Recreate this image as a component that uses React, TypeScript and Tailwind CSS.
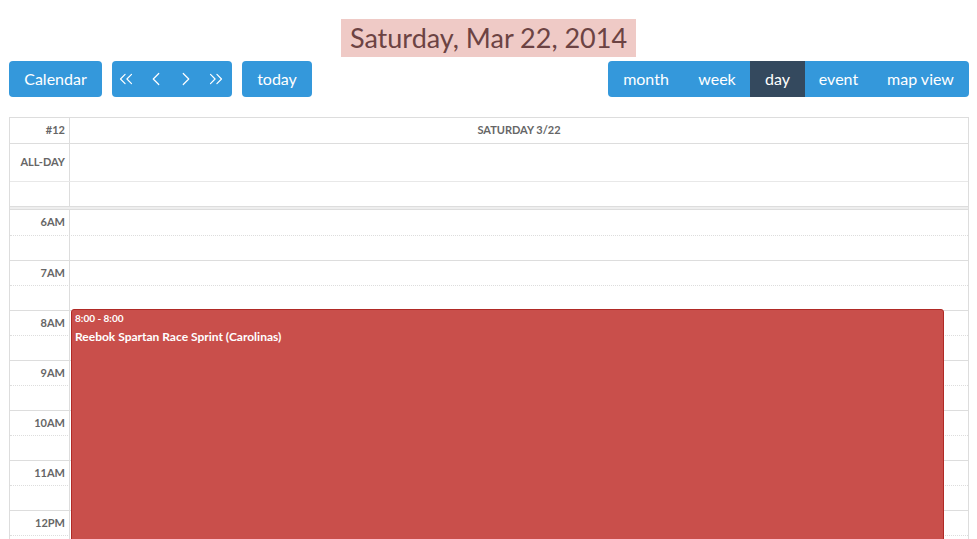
import { ChevronLeft, ChevronRight, ChevronsLeft, ChevronsRight } from "lucide-react";

const hours = ["6AM", "7AM", "8AM", "9AM", "10AM", "11AM", "12PM"];

export default function App() {
  return (
    <div className="h-[539px] overflow-hidden bg-white font-['Lato','Open_Sans',sans-serif] text-[#333]">
      <div className="flex justify-center pt-[19px]">
        <h2 className="bg-[#efcac6] px-[9px] text-[27px] leading-[38px] font-normal text-[#6c4343]">
          Saturday, Mar 22, 2014
        </h2>
      </div>

      <div className="mt-[4px] flex items-center pl-[9px] pr-[8px]">
        <button
          type="button"
          className="h-[36px] w-[93px] rounded-[4px] bg-[#3498db] text-[16px] text-white"
        >
          Calendar
        </button>
        <div className="ml-[10px] flex h-[36px] w-[120px] items-center gap-[8px] rounded-[4px] bg-[#3498db] pl-[3px] text-white">
          <ChevronsLeft size={22} strokeWidth={1.3} />
          <ChevronLeft size={22} strokeWidth={1.3} />
          <ChevronRight size={22} strokeWidth={1.3} />
          <ChevronsRight size={22} strokeWidth={1.3} />
        </div>
        <button
          type="button"
          className="ml-[10px] h-[36px] w-[70px] rounded-[4px] bg-[#3498db] text-[16px] text-white"
        >
          today
        </button>
        <div className="ml-auto flex h-[36px] overflow-hidden rounded-[4px] bg-[#3498db] text-[16px] text-white">
          <button type="button" className="w-[76px]">month</button>
          <button type="button" className="w-[66px]">week</button>
          <button type="button" className="w-[55px] bg-[#34495e]">day</button>
          <button type="button" className="w-[67px]">event</button>
          <button type="button" className="w-[97px]">map view</button>
        </div>
      </div>

      <div className="ml-[9px] mr-[8px] mt-[20px] border border-[#ddd]">
        <div className="flex h-[26px] border-b border-[#ddd] text-[11px] font-bold text-[#666]">
          <div className="flex w-[60px] items-center justify-end border-r border-[#ddd] pr-[4px]">#12</div>
          <div className="flex flex-1 items-center justify-center">SATURDAY 3/22</div>
        </div>
        <div className="flex h-[38px] border-b border-[#e8e8e8] text-[11px] font-bold text-[#666]">
          <div className="flex w-[60px] items-center justify-end border-r border-[#ddd] pr-[4px]">ALL-DAY</div>
          <div className="flex-1" />
        </div>
        <div className="flex h-[24px]">
          <div className="w-[60px] border-r border-[#ddd]" />
          <div className="flex-1" />
        </div>
        <div className="h-[4px] border-y border-[#ddd] bg-[#eee]" />

        <div className="relative">
          {hours.map((h, i) => (
            <div key={h}>
              <div className={`flex h-[25px] ${i > 0 ? "border-t border-[#ddd]" : ""}`}>
                <div className="flex w-[60px] items-center justify-end border-r border-[#ddd] pr-[4px] text-[11px] font-bold text-[#666]">
                  {h}
                </div>
                <div className="flex-1" />
              </div>
              <div className="flex h-[25px] border-t border-dotted border-[#ddd]">
                <div className="w-[60px] border-r border-[#ddd]" />
                <div className="flex-1" />
              </div>
            </div>
          ))}

          <div className="absolute left-[61px] right-[24px] top-[99px] h-[400px] rounded-[3px] border border-[#b02a26] bg-[#c94f4b] px-[3px] pt-[1px] text-white">
            <div className="text-[10px] font-bold leading-[14px]">8:00 - 8:00</div>
            <div className="mt-[4px] text-[12px] font-bold leading-[16px]">Reebok Spartan Race Sprint (Carolinas)</div>
          </div>
        </div>
      </div>
    </div>
  );
}
